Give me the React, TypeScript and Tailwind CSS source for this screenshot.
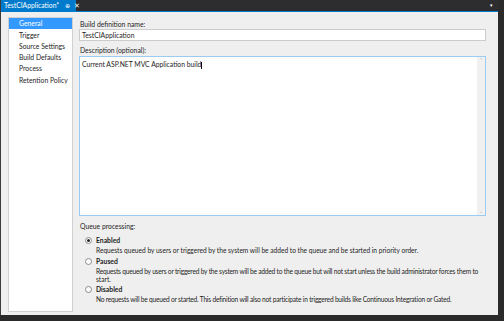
const navItems = ['General', 'Trigger', 'Source Settings', 'Build Defaults', 'Process', 'Retention Policy'];

const options = [
  {
    label: 'Enabled',
    checked: true,
    lines: ['Requests queued by users or triggered by the system will be added to the queue and be started in priority order.'],
  },
  {
    label: 'Paused',
    checked: false,
    lines: [
      'Requests queued by users or triggered by the system will be added to the queue but will not start unless the build administrator forces them to',
      'start.',
    ],
  },
  {
    label: 'Disabled',
    checked: false,
    lines: ['No requests will be queued or started. This definition will also not participate in triggered builds like Continuous Integration or Gated.'],
  },
];

const Radio = ({ checked }: { checked: boolean }) => (
  <div className="w-[7px] h-[7px] rounded-full border border-[#8a8a8a] bg-white flex items-center justify-center shrink-0">
    {checked && <div className="w-[3px] h-[3px] rounded-full bg-[#222]" />}
  </div>
);

export default function App() {
  return (
    <div
      className="w-[504px] h-[321px] bg-[#2a2a2a] overflow-hidden"
      style={{ fontFamily: 'Lato, "Open Sans", sans-serif' }}
    >
      <div className="w-[498px] h-[315px] flex flex-col bg-[#efefef] border-l border-[#3a3a3a] overflow-hidden">
        {/* tab strip */}
        <div className="h-[11px] bg-[#2d2d30] flex items-stretch shrink-0">
          <div className="w-[75px] bg-[#007acc] flex items-center pl-[3px] text-white text-[6.8px] leading-none">
            <span>TestCIApplication*</span>
            <span className="ml-[6px] text-[6px]">⊕</span>
            <span className="ml-[4px] text-[7px]">✕</span>
          </div>
          <div className="flex-1 flex items-center justify-end pr-[5px]">
            <span className="text-white text-[5px] leading-none">▾</span>
          </div>
        </div>
        <div className="h-[1px] bg-[#007acc] shrink-0" />

        <div className="h-[303px] flex px-[7px] pt-[5px] pb-[3px] gap-[6px] text-[#1e1e1e] leading-none">
          {/* left nav */}
          <div className="w-[65px] h-[295px] shrink-0 bg-white border border-[#d0d0d0] flex flex-col text-[6.8px]">
            {navItems.map((item, i) => (
              <div
                key={item}
                className={
                  i === 0
                    ? 'h-[11.3px] bg-[#3399ff] text-white pl-[10px] flex items-center whitespace-nowrap'
                    : 'h-[11.3px] pl-[10px] flex items-center whitespace-nowrap'
                }
              >
                {item}
              </div>
            ))}
          </div>

          {/* main form */}
          <div className="flex-1 min-w-0 flex flex-col pr-[5px] text-[6.8px]">
            <div className="pl-[1px] pt-[4px] h-[12px]">Build definition name:</div>
            <div className="h-[12px] bg-white border border-[#cccccc] flex items-center pl-[2px]">TestCIApplication</div>
            <div className="pl-[1px] pt-[3px] h-[15px] flex items-center">Description (optional):</div>
            <div className="h-[160px] bg-white border border-[#9ccbf1] flex">
              <div className="flex-1 pl-[2px] pt-[4px]">
                Current ASP.NET MVC Application build<span className="inline-block w-[1px] h-[7px] bg-black align-middle" />
              </div>
              <div className="w-[8px] bg-[#f0f0f0] flex flex-col justify-between items-center text-[#b8b8b8] text-[5px] py-[1px]">
                <span>⌃</span>
                <span>⌄</span>
              </div>
            </div>
            <div className="pl-[1px] h-[20px] flex items-center">Queue processing:</div>
            <div className="flex flex-col pl-[6px] pt-[1px] gap-[4px]">
              {options.map((o) => (
                <div key={o.label} className="flex flex-col">
                  <div className="flex items-center gap-[4px] h-[7px]">
                    <Radio checked={o.checked} />
                    <span className="font-bold">{o.label}</span>
                  </div>
                  <div className="pl-[11px] pt-[3px] flex flex-col gap-[1.5px] text-[6.6px]">
                    {o.lines.map((l) => (
                      <div key={l} className={l.length > 120 ? 'whitespace-nowrap tracking-[-0.2px]' : 'whitespace-nowrap'}>
                        {l}
                      </div>
                    ))}
                  </div>
                </div>
              ))}
            </div>
          </div>
        </div>
      </div>
    </div>
  );
}
